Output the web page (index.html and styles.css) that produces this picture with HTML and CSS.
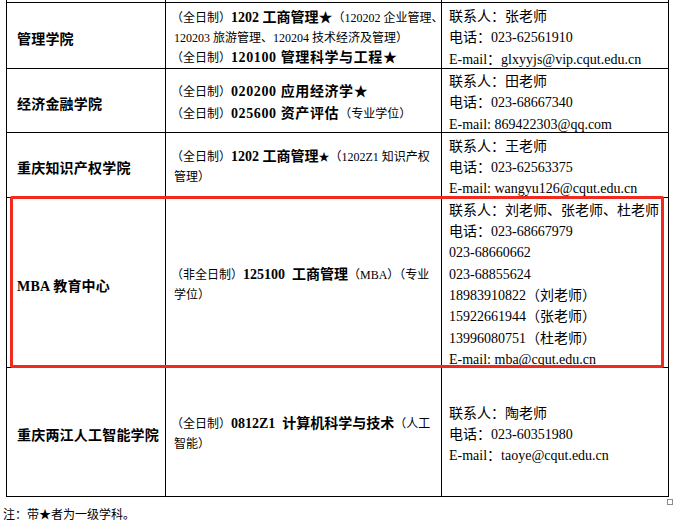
FILE: index.html
```html
<!DOCTYPE html>
<html lang="zh-CN">
<head>
<meta charset="utf-8">
<title>招生学院联系方式</title>
<link rel="stylesheet" href="styles.css">
</head>
<body>
<div class="page">
  <div class="grid">
    <div class="cell cut"></div><div class="cell cut"></div><div class="cell cut"></div>

    <div class="cell name">管理学院</div>
    <div class="cell major">
      <div class="line"><span class="s">（全日制）</span><b>1202 工商管理★</b><span class="s">（120202 企业管理、</span></div>
      <div class="line cont">120203 旅游管理、120204 技术经济及管理）</div>
      <div class="line"><span class="s">（全日制）</span><b class="sp">120100 管理科学与工程★</b></div>
    </div>
    <div class="cell contact">
      <div>联系人：张老师</div>
      <div>电话：023-62561910</div>
      <div>E-mail：glxyyjs@vip.cqut.edu.cn</div>
    </div>

    <div class="cell name">经济金融学院</div>
    <div class="cell major wide">
      <div class="line"><span class="s">（全日制）</span><b class="sp">020200 应用经济学★</b></div>
      <div class="line"><span class="s">（全日制）</span><b class="sp">025600 资产评估</b><span class="s">（专业学位）</span></div>
    </div>
    <div class="cell contact">
      <div>联系人：田老师</div>
      <div>电话：023-68667340</div>
      <div>E-mail: 869422303@qq.com</div>
    </div>

    <div class="cell name">重庆知识产权学院</div>
    <div class="cell major">
      <div class="line"><span class="s">（全日制）</span><b>1202 工商管理<span class="star">★</span></b><span class="s">（1202Z1 知识产权</span></div>
      <div class="line cont">管理）</div>
    </div>
    <div class="cell contact">
      <div>联系人：王老师</div>
      <div>电话：023-62563375</div>
      <div>E-mail: wangyu126@cqut.edu.cn</div>
    </div>

    <div class="cell name">MBA 教育中心</div>
    <div class="cell major">
      <div class="line"><span class="s">（非全日制）</span><b>125100&nbsp; 工商管理</b><span class="s">（MBA）（专业</span></div>
      <div class="line cont">学位）</div>
    </div>
    <div class="cell contact">
      <div>联系人：刘老师、张老师、杜老师</div>
      <div>电话：023-68667979</div>
      <div>023-68660662</div>
      <div>023-68855624</div>
      <div>18983910822（刘老师）</div>
      <div>15922661944（张老师）</div>
      <div>13996080751（杜老师）</div>
      <div>E-mail: mba@cqut.edu.cn</div>
    </div>

    <div class="cell name">重庆两江人工智能学院</div>
    <div class="cell major">
      <div class="line"><span class="s">（全日制）</span><b>0812Z1&nbsp; 计算机科学与技术</b><span class="s">（人工</span></div>
      <div class="line cont">智能）</div>
    </div>
    <div class="cell contact">
      <div>联系人：陶老师</div>
      <div>电话：023-60351980</div>
      <div>E-mail：taoye@cqut.edu.cn</div>
    </div>
  </div>

  <p class="note">注：带★者为一级学科。</p>

  <div class="highlight"></div>
  <div class="handle"></div>
</div>
</body>
</html>
```
FILE: styles.css
```css
* {
  box-sizing: border-box;
}

body {
  margin: 0;
  background: #ffffff;
  color: #000000;
  font-family: "Liberation Serif", "Noto Sans CJK SC", serif;
}

.page {
  position: relative;
  width: 682px;
  height: 532px;
  overflow: hidden;
}

.grid {
  display: grid;
  width: 663px;
  margin-left: 6px;
  grid-template-columns: 158px 275px 226px;
  grid-template-rows: 2px 65px 63px 64px 169px 128px;
  gap: 1px;
  padding: 0 1px 1px;
  background: #000000;
}

.cell {
  background: #ffffff;
  display: flex;
  flex-direction: column;
  justify-content: center;
  min-width: 0;
  white-space: nowrap;
}

.cut {
  padding: 0;
}

.name {
  padding: 8px 0 0 10px;
  font-size: 14px;
  font-weight: bold;
  letter-spacing: 0.2px;
  line-height: 20px;
}

.major {
  padding: 4px 0 0 5px;
  font-size: 12px;
  line-height: 20px;
}

.major.wide {
  line-height: 21px;
}

.major b {
  font-size: 14px;
  font-weight: bold;
}

.major b.sp {
  letter-spacing: 0.6px;
}

.major .cont {
  padding-left: 3px;
}

.star {
  font-size: 11px;
}

.contact {
  padding: 5px 0 0 7px;
  font-size: 14px;
  line-height: 21.3px;
}

.note {
  margin: 10px 0 0 3px;
  font-size: 12px;
  line-height: 16px;
}

.highlight {
  position: absolute;
  left: 10px;
  top: 196px;
  width: 654px;
  height: 172px;
  border: 3px solid #f02a1e;
  border-radius: 2px;
}

.handle {
  position: absolute;
  left: 667px;
  top: 499px;
  width: 6px;
  height: 6px;
  border: 1px solid #8a8a8a;
  background: #ffffff;
}
```
